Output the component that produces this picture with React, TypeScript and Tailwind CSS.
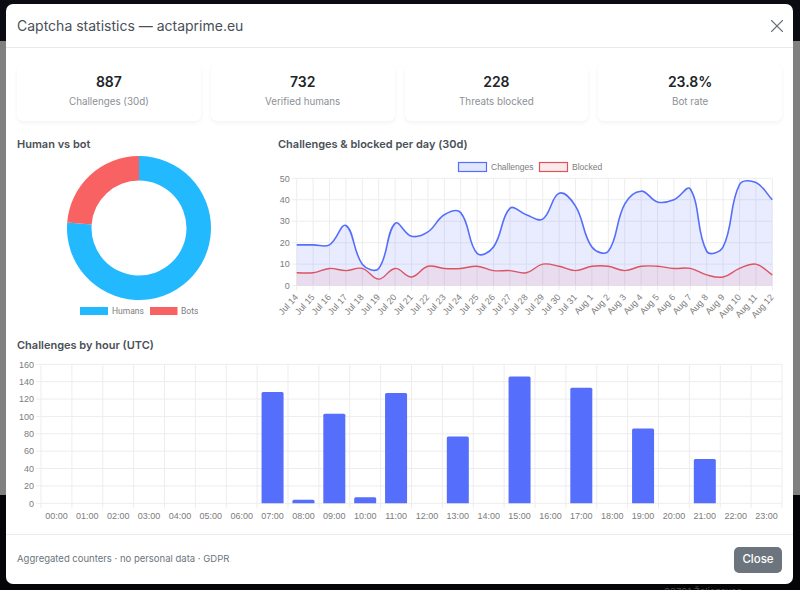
import React from 'react'
import { X } from 'lucide-react'

const days = [
  'Jul 14', 'Jul 15', 'Jul 16', 'Jul 17', 'Jul 18', 'Jul 19', 'Jul 20', 'Jul 21', 'Jul 22', 'Jul 23',
  'Jul 24', 'Jul 25', 'Jul 26', 'Jul 27', 'Jul 28', 'Jul 29', 'Jul 30', 'Jul 31', 'Aug 1', 'Aug 2',
  'Aug 3', 'Aug 4', 'Aug 5', 'Aug 6', 'Aug 7', 'Aug 8', 'Aug 9', 'Aug 10', 'Aug 11', 'Aug 12',
]
const challenges = [19, 19, 19, 28, 10, 8, 29, 23, 25, 33, 34, 15, 18, 36, 33, 31, 43, 37, 18, 16, 38, 44, 39, 40, 45, 16, 18, 47, 48, 40]
const blocked = [6, 6, 8, 7, 8, 3, 8, 4, 9, 8, 8, 9, 7, 7, 6, 10, 9, 7, 9, 9, 7, 9, 9, 8, 8, 5, 4, 8, 10, 5]
const hours: Record<number, number> = { 7: 128, 8: 4, 9: 103, 10: 7, 11: 127, 13: 77, 15: 146, 17: 133, 19: 86, 21: 51 }

const stats = [
  { value: '887', label: 'Challenges (30d)' },
  { value: '732', label: 'Verified humans' },
  { value: '228', label: 'Threats blocked' },
  { value: '23.8%', label: 'Bot rate' },
]

type Pt = { x: number; y: number }

// same spline chart.js uses for tension 0.4
function smoothPath(pts: Pt[], top: number, bottom: number) {
  const clamp = (v: number) => Math.min(bottom, Math.max(top, v))
  let d = `M${pts[0].x} ${pts[0].y}`
  const ctrl = pts.map((p, i) => {
    const prev = pts[i - 1] ?? p
    const next = pts[i + 1] ?? p
    const d01 = Math.hypot(p.x - prev.x, p.y - prev.y)
    const d12 = Math.hypot(next.x - p.x, next.y - p.y)
    const s01 = d01 / (d01 + d12) || 0
    const s12 = d12 / (d01 + d12) || 0
    return {
      px: p.x - 0.4 * s01 * (next.x - prev.x),
      py: p.y - 0.4 * s01 * (next.y - prev.y),
      nx: p.x + 0.4 * s12 * (next.x - prev.x),
      ny: p.y + 0.4 * s12 * (next.y - prev.y),
    }
  })
  for (let i = 1; i < pts.length; i++) {
    d += `C${ctrl[i - 1].nx} ${clamp(ctrl[i - 1].ny)} ${ctrl[i].px} ${clamp(ctrl[i].py)} ${pts[i].x} ${pts[i].y}`
  }
  return d
}

const Card: React.FC<{ value: string; label: string }> = ({ value, label }) => (
  <div className="flex-1 h-[57px] bg-white rounded-md shadow-[0_2px_4px_rgba(0,0,0,0.05)] flex flex-col items-center pt-[9px]">
    <div className="text-[14px] leading-[18px] font-semibold text-[#212529]">{value}</div>
    <div className="mt-[4px] text-[9.8px] leading-[14px] text-[#8b9096]">{label}</div>
  </div>
)

const Doughnut: React.FC = () => {
  const cx = 117
  const cy = 72
  const R = 72
  const r = 47.5
  const a = 0.762 * 2 * Math.PI
  const px = (rad: number) => cx + rad * Math.sin(a)
  const py = (rad: number) => cy - rad * Math.cos(a)
  return (
    <svg width="245" height="162" className="block">
      <path
        d={`M${cx} ${cy - R}A${R} ${R} 0 1 1 ${px(R)} ${py(R)}L${px(r)} ${py(r)}A${r} ${r} 0 1 0 ${cx} ${cy - r}Z`}
        fill="#22b9ff"
      />
      <path
        d={`M${px(R)} ${py(R)}A${R} ${R} 0 0 1 ${cx} ${cy - R}L${cx} ${cy - r}A${r} ${r} 0 0 0 ${px(r)} ${py(r)}Z`}
        fill="#f96262"
      />
      <rect x="58" y="151" width="28" height="8" fill="#22b9ff" />
      <text x="90" y="158" fontSize="8.5" fill="#7c7c7c" fontFamily="Roboto, sans-serif">Humans</text>
      <rect x="128" y="151" width="27.5" height="8" fill="#f96262" />
      <text x="159" y="158" fontSize="8.5" fill="#7c7c7c" fontFamily="Roboto, sans-serif">Bots</text>
    </svg>
  )
}

const LineChart: React.FC = () => {
  // svg origin sits at page x=270, y=156
  const left = 26.7
  const right = 502.3
  const top = 22.3
  const bottom = 129.6
  const step = (right - left) / 29
  const toY = (v: number) => bottom - (v / 50) * (bottom - top)
  const a = challenges.map((v, i) => ({ x: left + i * step, y: toY(v) }))
  const b = blocked.map((v, i) => ({ x: left + i * step, y: toY(v) }))
  const pa = smoothPath(a, top, bottom)
  const pb = smoothPath(b, top, bottom)
  const close = `L${right} ${bottom}L${left} ${bottom}Z`
  return (
    <svg width="520" height="177" className="block">
      {[0, 10, 20, 30, 40, 50].map((v) => (
        <g key={v}>
          <line x1={left - 5} x2={right} y1={toY(v)} y2={toY(v)} stroke="#ededed" />
          <text x={left - 7} y={toY(v) + 3.2} textAnchor="end" fontSize="9" fill="#7c7c7c" fontFamily="'Liberation Sans', sans-serif">{v}</text>
        </g>
      ))}
      {days.map((d, i) => {
        const x = left + i * step
        return (
          <g key={d}>
            <line x1={x} x2={x} y1={top} y2={bottom + 5} stroke="#ededed" />
            <text
              x={x + 2}
              y={bottom + 12}
              textAnchor="end"
              fontSize="9"
              fill="#7c7c7c"
              fontFamily="'Liberation Sans', sans-serif"
              transform={`rotate(-48 ${x + 2} ${bottom + 12})`}
            >
              {d}
            </text>
          </g>
        )
      })}
      <path d={pa + close} fill="#556efb" fillOpacity="0.13" />
      <path d={pb + close} fill="#e5525f" fillOpacity="0.1" />
      <path d={pa} fill="none" stroke="#556efb" strokeWidth="1.6" />
      <path d={pb} fill="none" stroke="#dc5361" strokeWidth="1.4" />

      <rect x="188.5" y="6.5" width="28" height="9" fill="#e3e7fe" stroke="#556efb" strokeWidth="1.2" />
      <text x="221" y="14" fontSize="8.5" fill="#7c7c7c" fontFamily="'Liberation Sans', sans-serif">Challenges</text>
      <rect x="269.5" y="6.5" width="28" height="9" fill="#fbe9eb" stroke="#dc5361" strokeWidth="1.2" />
      <text x="302" y="14" fontSize="8.5" fill="#7c7c7c" fontFamily="'Liberation Sans', sans-serif">Blocked</text>
    </svg>
  )
}

const BarChart: React.FC = () => {
  const left = 34
  const right = 775
  const top = 6.3
  const bottom = 145.3
  const step = (right - left) / 24
  const toY = (v: number) => bottom - (v / 160) * (bottom - top)
  const cols = Array.from({ length: 24 }, (_, i) => i)
  return (
    <svg width="780" height="164" className="block">
      {[0, 20, 40, 60, 80, 100, 120, 140, 160].map((v) => (
        <g key={v}>
          <line x1={left - 5} x2={right} y1={toY(v)} y2={toY(v)} stroke="#ededed" />
          <text x={left - 7} y={toY(v) + 3.2} textAnchor="end" fontSize="9" fill="#7c7c7c" fontFamily="'Liberation Sans', sans-serif">{v}</text>
        </g>
      ))}
      {[...cols, 24].map((i) => (
        <line key={i} x1={left + i * step} x2={left + i * step} y1={top} y2={bottom + 5} stroke="#ededed" />
      ))}
      {cols.map((i) => {
        const x = left + (i + 0.5) * step
        const v = hours[i]
        return (
          <g key={i}>
            {v ? (
              <path
                d={`M${x - 11} ${bottom}V${toY(v) + 1.5}Q${x - 11} ${toY(v)} ${x - 9.5} ${toY(v)}H${x + 9.5}Q${x + 11} ${toY(v)} ${x + 11} ${toY(v) + 1.5}V${bottom}Z`}
                fill="#556efb"
              />
            ) : null}
            <text x={x} y={bottom + 16} textAnchor="middle" fontSize="9" fill="#7c7c7c" fontFamily="'Liberation Sans', sans-serif">
              {String(i).padStart(2, '0')}:00
            </text>
          </g>
        )
      })}
    </svg>
  )
}

const App: React.FC = () => {
  return (
    <div className="relative w-[800px] h-[590px] overflow-hidden flex flex-col bg-black font-['Inter',sans-serif]">
      {/* Page behind the backdrop */}
      <div className="h-[41px] bg-[#0b0b14]" />
      <div className="h-[454px] bg-[#808080]" />
      <div className="flex-1 bg-[#050508] flex justify-end pr-[58px] items-end">
        <span className="text-[9.5px] leading-[12px] text-[#4a4a4a] translate-y-[8px]">93701 Želiezovce</span>
      </div>

      {/* Modal */}
      <div className="absolute left-[6px] top-[4px] w-[787px] h-[580px] bg-white rounded-[7px] flex flex-col">
        <div className="h-[44px] shrink-0 border-b border-[#e6e8ea] flex items-center justify-between pl-[11px] pr-[5px]">
          <h2 className="text-[14px] text-[#495057] font-normal">Captcha statistics — actaprime.eu</h2>
          <X className="w-[22px] h-[22px] text-[#6a7178]" strokeWidth={1.2} />
        </div>

        <div className="flex-1 px-[11px] pt-[16px] flex flex-col">
          <div className="flex gap-[10px]">
            {stats.map((s) => (
              <Card key={s.label} value={s.value} label={s.label} />
            ))}
          </div>

          <div className="flex mt-[16px]">
            <div className="w-[261px] shrink-0">
              <h3 className="text-[11px] leading-[14px] font-semibold text-[#495057]">Human vs bot</h3>
              <div className="ml-[5px] mt-[5px]">
                <Doughnut />
              </div>
            </div>
            <div className="-ml-[8px]">
              <h3 className="ml-[8px] text-[11px] leading-[14px] font-semibold text-[#495057]">Challenges &amp; blocked per day (30d)</h3>
              <div className="mt-[5px]">
                <LineChart />
              </div>
            </div>
          </div>

          <h3 className="mt-[5px] text-[11px] leading-[14px] font-semibold text-[#495057]">Challenges by hour (UTC)</h3>
          <div className="-ml-[10px] mt-[6px]">
            <BarChart />
          </div>
        </div>

        <div className="h-[50px] shrink-0 border-t border-[#e9ebed] flex items-center justify-between pl-[11px] pr-[11px]">
          <span className="text-[9.5px] text-[#6c757d]">Aggregated counters · no personal data · GDPR</span>
          <button className="w-[48px] h-[26px] rounded-[5px] bg-[#6c757d] text-white text-[11.5px] font-medium">Close</button>
        </div>
      </div>
    </div>
  )
}

export default App
